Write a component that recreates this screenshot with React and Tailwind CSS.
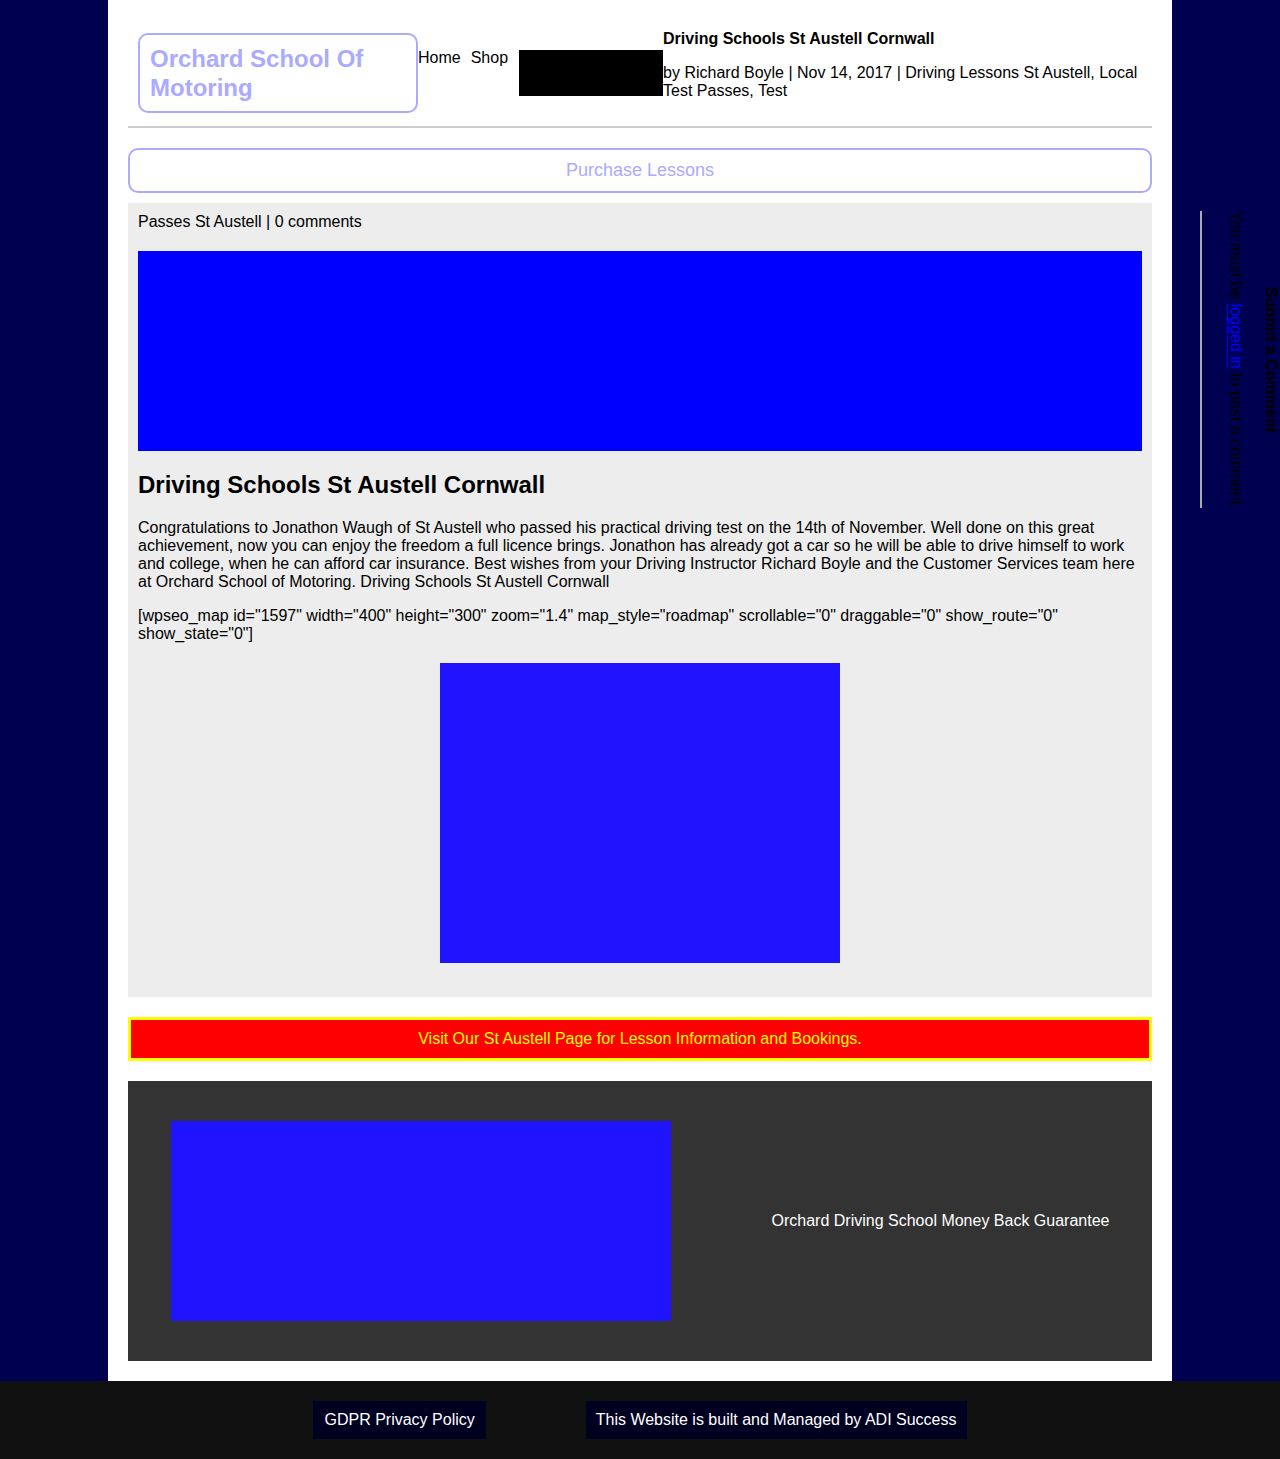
export default function App() {
  return (
    <div className="min-h-[1459px] bg-[#000050] font-['Liberation_Sans',Arial,sans-serif] text-black">
      <div className="flex">
        <div className="w-[108px] shrink-0" />

        {/* main column */}
        <main className="w-[1064px] shrink-0 bg-white px-[20px] pb-[20px]">
          <header className="flex h-[128px] items-start border-b-2 border-[#cccccc] pl-[10px]">
            <div className="mt-[33px] h-[80px] w-[280px] shrink-0 rounded-[10px] border-2 border-[#aaaaff] px-[10px] pt-[9px] text-[24px] font-bold leading-[29px] text-[#aaaaff]">
              Orchard School Of Motoring
            </div>
            <nav className="mt-[49px] flex gap-[10px] text-[16px] leading-[18px]">
              <a href="#">Home</a>
              <a href="#">Shop</a>
            </nav>
            <div className="ml-[11px] mt-[50px] h-[46px] w-[144px] shrink-0 bg-black" />
            <div className="mt-[30px] flex-1 text-[16px] leading-[18px]">
              <h1 className="font-bold">Driving Schools St Austell Cornwall</h1>
              <p className="mt-[16px]">
                by Richard Boyle | Nov 14, 2017 | Driving Lessons St Austell, Local Test Passes, Test
              </p>
            </div>
          </header>

          <button className="mt-[20px] block h-[45px] w-full rounded-[10px] border-2 border-[#aaaaff] bg-white text-[18px] text-[#aaaaff]">
            Purchase Lessons
          </button>

          <article className="mt-[10px] bg-[#ededed] px-[10px] pb-[34px] pt-[10px] text-[16px] leading-[18px]">
            <p>Passes St Austell | 0 comments</p>
            <div className="mt-[20px] h-[200px] w-full bg-[#0000ff]" />
            <h2 className="mt-[20px] text-[24px] font-bold leading-[28px]">Driving Schools St Austell Cornwall</h2>
            <p className="mt-[20px]">
              Congratulations to Jonathon Waugh of St Austell who passed his practical driving test on the 14th of
              November. Well done on this great achievement, now you can enjoy the freedom a full licence brings.
              Jonathon has already got a car so he will be able to drive himself to work and college, when he can
              afford car insurance. Best wishes from your Driving Instructor Richard Boyle and the Customer Services
              team here at Orchard School of Motoring. Driving Schools St Austell Cornwall
            </p>
            <p className="mt-[16px]">
              [wpseo_map id="1597" width="400" height="300" zoom="1.4" map_style="roadmap" scrollable="0"
              draggable="0" show_route="0" show_state="0"]
            </p>
            <div className="mx-auto mt-[20px] h-[300px] w-[400px] bg-[#2014ff]" />
          </article>

          <a
            href="#"
            className="mt-[20px] flex h-[44px] items-center justify-center border-[3px] border-[#ffff00] bg-[#ff0000] text-[16px] text-[#ffff00]"
          >
            Visit Our St Austell Page for Lesson Information and Bookings.
          </a>

          <section className="mt-[20px] flex h-[280px] items-center bg-[#333333] pl-[43px]">
            <div className="h-[200px] w-[500px] shrink-0 bg-[#2014ff]" />
            <p className="flex-1 pl-[58px] text-center text-[16px] text-white">
              Orchard Driving School Money Back Guarantee
            </p>
          </section>
        </main>

        {/* comment sidebar */}
        <aside className="w-[108px] shrink-0 pl-[28px] pt-[211px]">
          <div className="h-[297px] w-[80px] border-l-2 border-[#aaaaaa] pl-[25px] text-center text-[16px] leading-[18px] [writing-mode:vertical-rl]">
            <h3 className="ml-[17px] whitespace-nowrap font-bold">Submit a Comment</h3>
            <p className="whitespace-nowrap">
              You must be{" "}
              <a href="#" className="text-[#0000ff] underline">
                logged in
              </a>{" "}
              to post a comment.
            </p>
          </div>
        </aside>
      </div>

      <footer className="flex h-[78px] justify-center gap-[100px] bg-[#111111] pt-[20px] text-[16px] text-white">
        <a href="#" className="flex h-[38px] items-center bg-[#000020] px-[11px]">
          GDPR Privacy Policy
        </a>
        <a href="#" className="flex h-[38px] items-center bg-[#000020] px-[10px]">
          This Website is built and Managed by ADI Success
        </a>
      </footer>
    </div>
  );
}
